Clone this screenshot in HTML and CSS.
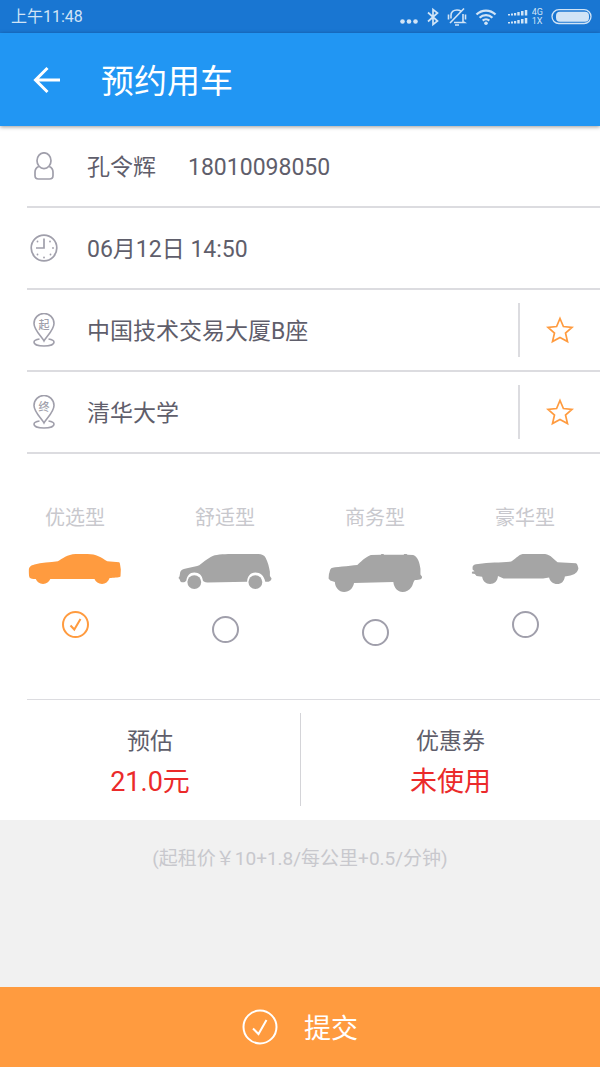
FILE: index.html
```html
<!DOCTYPE html>
<html lang="zh-CN">
<head>
<meta charset="utf-8">
<meta name="viewport" content="width=device-width, initial-scale=1">
<title>预约用车</title>
<link rel="stylesheet" href="styles.css">
</head>
<body>
<div class="status">
  <span class="status-time">上午11:48</span>
  <div class="status-icons">
    <svg width="18" height="20" viewBox="0 0 18 20" fill="currentColor"><circle cx="2.5" cy="14.500" r="2.300"/><circle cx="9" cy="14.500" r="2.300"/><circle cx="15.500" cy="14.500" r="2.300"/></svg>
    <svg class="i-bt" width="12" height="20" viewBox="0 0 12 20" fill="none" stroke="currentColor" stroke-width="1.700"><path d="M1 5.500 10.500 14 6 17.500V2.500l4.500 3.500L1 14.500"/></svg>
    <svg class="i-bell" width="20" height="20" viewBox="0 0 20 20" fill="none" stroke="currentColor" stroke-width="1.600"><path d="M4 11.500V8.500C4 5 6.500 3 10 3c1.500 0 2.800.3 3.800 1M16 7v7.500l1.500 1H7M8 18h4M17 1.500 3 16M1.500 7.500v5M18.500 7.500v5"/></svg>
    <svg class="i-wifi" width="22" height="20" viewBox="0 0 22 20" fill="none" stroke="currentColor" stroke-width="2.300"><path d="M1.500 7.500a13.500 13.500 0 0 1 19 0M4.600 10.800a9 9 0 0 1 12.800 0M7.700 13.700a4.800 4.800 0 0 1 6.600 0"/><circle cx="11" cy="16.200" r="1.800" fill="currentColor" stroke="none"/></svg>
    <svg class="i-signal" width="22" height="20" viewBox="0 0 22 20" fill="currentColor"><path d="M1 7h2v1.500H1zM4 6.500h2v2H4zM7 6h2.200v2.500H7zM10.300 5h2.400v3.500h-2.400zM14 4h2.500v4.500H14zM17.800 3h2.500v5.500h-2.500zM1 15h2v1.500H1zM4 14.500h2v2H4zM7 14h2.200v2.500H7zM10.300 13h2.400v3.500h-2.400zM14 12h2.500v4.500H14zM17.800 11h2.500v5.500h-2.500z"/></svg>
    <span class="net"><span>4G</span><span>1X</span></span>
    <svg class="i-battery" width="41" height="20" viewBox="0 0 41 20"><rect x="1" y="2.700" width="39" height="13.800" rx="6.900" fill="none" stroke="currentColor" stroke-width="1.300"/><rect x="5" y="4.700" width="33" height="10" rx="4" fill="currentColor"/></svg>
  </div>
</div>

<header class="appbar">
  <button class="back" type="button" aria-label="返回">
    <svg width="27" height="28" viewBox="0 0 27 28" fill="none" stroke="currentColor" stroke-width="3"><path d="M14.500 2 2.500 14l12 12M2.500 14H27"/></svg>
  </button>
  <h1 class="title">预约用车</h1>
</header>

<form class="form">
  <section class="rows">
    <div class="row">
      <svg class="row-icon" width="20" height="28" viewBox="0 0 20 28" fill="none" stroke="currentColor" stroke-width="1.700"><ellipse cx="10" cy="8.700" rx="7" ry="7.900"/><path d="M4.800 14.500C2.500 15.500 1 17.500 1 20v3.500C1 26 2.500 27 4.500 27h11c2 0 3.500-1 3.500-3.500V20c0-2.500-1.500-4.500-3.800-5.500"/></svg>
      <div class="row-text"><span>孔令辉</span><span>18010098050</span></div>
    </div>
    <div class="row">
      <svg class="row-icon" width="28" height="28" viewBox="0 0 28 28" fill="none" stroke="currentColor" stroke-width="1.700"><circle cx="14" cy="14" r="12.800"/><path d="M14 4.500V14H6"/><g fill="currentColor" stroke="none"><circle cx="20" cy="7.500" r=".9"/><circle cx="23" cy="14" r=".9"/><circle cx="20.500" cy="20.500" r=".9"/><circle cx="14" cy="23.500" r=".9"/><circle cx="7.500" cy="20.500" r=".9"/><circle cx="7.500" cy="7.500" r=".9"/></g></svg>
      <div class="row-text"><span>06月12日 14:50</span></div>
    </div>
    <div class="row">
      <svg class="row-icon" width="22" height="34" viewBox="0 0 22 34" fill="none" stroke="currentColor" stroke-width="1.600"><path d="M11 28C9 24 1 17 1 10.500a10 10 0 0 1 20 0C21 17 13 24 11 28z"/><path d="M6.500 26C3 26.500 1 27.700 1 29.200 1 31.500 5.500 33 11 33s10-1.500 10-3.800c0-1.500-2-2.700-5.500-3.200"/><text class="pin-text" x="11" y="16" text-anchor="middle">起</text></svg>
      <div class="row-text"><span>中国技术交易大厦B座</span></div>
      <button class="star" type="button" aria-label="收藏起点"><svg width="28" height="28" viewBox="0 0 28 28" fill="none" stroke="currentColor" stroke-width="1.700"><path d="M14 2.500 17.400 10.500 26 11.300 19.500 17 21.500 25.500 14 21.500 6.500 25.500 8.500 17 2 11.300 10.600 10.500z"/></svg></button>
    </div>
    <div class="row">
      <svg class="row-icon" width="22" height="34" viewBox="0 0 22 34" fill="none" stroke="currentColor" stroke-width="1.600"><path d="M11 28C9 24 1 17 1 10.500a10 10 0 0 1 20 0C21 17 13 24 11 28z"/><path d="M6.500 26C3 26.500 1 27.700 1 29.200 1 31.500 5.500 33 11 33s10-1.500 10-3.800c0-1.500-2-2.700-5.500-3.200"/><text class="pin-text" x="11" y="16" text-anchor="middle">终</text></svg>
      <div class="row-text"><span>清华大学</span></div>
      <button class="star" type="button" aria-label="收藏终点"><svg width="28" height="28" viewBox="0 0 28 28" fill="none" stroke="currentColor" stroke-width="1.700"><path d="M14 2.500 17.400 10.500 26 11.300 19.500 17 21.500 25.500 14 21.500 6.500 25.500 8.500 17 2 11.300 10.600 10.500z"/></svg></button>
    </div>
  </section>

  <section class="cars">
    <label class="car">
      <span class="car-name">优选型</span>
      <svg class="car-shape" width="94" height="30" viewBox="84 191 280 91"><path d="M84 240C84 230 90 226 101 223 122 217 148 216 172 213 186 205 200 192 226 191H262C288 191 304 202 322 213L358 216C361 218 361 226 363 238L362 259C356 263 340 262 329 264 325 276 316 282 306 282 295 282 287 276 283 267H149C145 276 138 282 127 282 116 282 109 275 105 267 96 267 89 266 86 262 84 256 84 248 84 240z"/></svg>
      <span class="pick"><input type="radio" name="car" checked><svg class="tick" width="27" height="27" viewBox="0 0 27 27"><path d="M8.500 14.500 12.300 18.500 18.500 8"/></svg></span>
    </label>
    <label class="car">
      <span class="car-name">舒适型</span>
      <svg class="car-shape" width="94" height="35" viewBox="534 191 282 106"><path d="M537 259C540 252 537 244 545 239 559 232 581 231 597 225 613 214 627 200 644 195 660 191 690 191 710 191H776C786 191 794 195 798 202 805 215 809 232 811 245L811 258 816 265C815 273 808 276 797 275 793 256 782 247 767 247 751 247 743 259 742 275L622 277C613 277 610 274 608 271 606 256 597 247 582 247 568 247 560 257 558 271 554 277 546 279 540 274L537 267 534 264z"/><circle cx="582" cy="276" r="21"/><circle cx="767" cy="276" r="21"/></svg>
      <span class="pick"><input type="radio" name="car"><svg class="tick" width="27" height="27" viewBox="0 0 27 27"><path d="M8.500 14.500 12.300 18.500 18.500 8"/></svg></span>
    </label>
    <label class="car">
      <span class="car-name">商务型</span>
      <svg class="car-shape" width="95" height="38" viewBox="83 191 284 115"><path d="M84 252C87 245 86 239 91 234 98 230 146 227 170 224 180 216 192 201 211 194L241 193 243 191H249L251 193H310L312 191H319L322 193 339 194C353 198 359 218 361 236V253L366 260C366 267 361 270 344 270 338 276 339 285 334 291 327 301 317 306 307 306 292 306 281 294 279 276L160 279C157 295 146 306 130 306 114 306 103 293 102 276L88 271 83 265z"/></svg>
      <span class="pick"><input type="radio" name="car"><svg class="tick" width="27" height="27" viewBox="0 0 27 27"><path d="M8.500 14.500 12.300 18.500 18.500 8"/></svg></span>
    </label>
    <label class="car">
      <span class="car-name">豪华型</span>
      <svg class="car-shape" width="108" height="30" viewBox="513 191 324 91"><path d="M516 230C517 224 523 222 533 221 566 216 604 217 633 214 643 209 654 194 668 191H736C753 193 761 207 774 216L830 219C835 222 835 229 837 234 835 247 825 253 813 256L796 259C794 274 785 282 773 282 760 282 751 274 748 262L730 265H610L593 258C592 274 582 282 569 282 556 282 547 273 545 260L528 258 523 252 514 250 514 245 522 243 516 238z"/></svg>
      <span class="pick"><input type="radio" name="car"><svg class="tick" width="27" height="27" viewBox="0 0 27 27"><path d="M8.500 14.500 12.300 18.500 18.500 8"/></svg></span>
    </label>
  </section>

  <section class="fare">
    <div class="fare-cell"><span class="fare-label">预估</span><strong class="fare-value">21.0元</strong></div>
    <div class="fare-cell"><span class="fare-label">优惠券</span><strong class="fare-value">未使用</strong></div>
  </section>

  <p class="note">(起租价￥10+1.8/每公里+0.5/分钟)</p>

  <button class="submit" type="submit">
    <svg width="36" height="36" viewBox="0 0 36 36" fill="none" stroke="currentColor" stroke-width="2"><circle cx="18" cy="18" r="16.500"/><path d="M11 19.500 16.500 25 24.500 11"/></svg>
    <span class="submit-text">提交</span>
  </button>
</form>
</body>
</html>
```
FILE: styles.css
```css
* {
  box-sizing: border-box;
}

body {
  margin: 0;
  min-height: 100vh;
  display: flex;
  flex-direction: column;
  background: #f1f1f1;
  color: #5f5e6b;
  font-family: Roboto, "Noto Sans CJK SC", sans-serif;
  font-size: 23px;
  line-height: 32px;
}

button {
  font: inherit;
  border: 0;
  padding: 0;
  background: none;
  cursor: pointer;
}

svg {
  display: block;
  flex: none;
}

.status {
  display: flex;
  align-items: center;
  justify-content: space-between;
  height: 33px;
  padding: 0 8px 0 11px;
  background: #1976d2;
  color: #d1e4f6;
}

.status-time {
  font-size: 16px;
}

.status-icons {
  display: flex;
  align-items: center;
}

.i-bt {
  margin-left: 9px;
}

.i-bell,
.i-wifi {
  margin-left: 8px;
}

.i-signal {
  margin-left: 10px;
}

.net {
  display: flex;
  flex-direction: column;
  margin: 0 8px 0 3px;
  font-size: 9px;
  line-height: 9px;
}

.net span {
  height: 9px;
  overflow: hidden;
}

.appbar {
  display: flex;
  align-items: center;
  gap: 41px;
  height: 93px;
  padding-left: 33px;
  background: #2196f3;
  color: #fff;
  box-shadow: 0 1px 4px rgba(0, 0, 0, 0.4);
  position: relative;
}

.back {
  color: #fff;
}

.title {
  margin: 0;
  padding-top: 4px;
  font-size: 33px;
  line-height: 48px;
  font-weight: 400;
}

.form {
  flex: 1;
  display: flex;
  flex-direction: column;
}

.rows {
  padding-left: 27px;
  background: #fff;
}

.row {
  display: grid;
  grid-template-columns: 33px 1fr auto;
  align-items: center;
  column-gap: 27px;
  height: 82px;
  border-bottom: 2px solid #dcdce0;
}

.row-icon {
  justify-self: center;
  color: #a09fab;
}

.pin-text {
  font-size: 11px;
  font-weight: 500;
  fill: currentColor;
  stroke: none;
}

.row-text {
  display: flex;
  gap: 32px;
  padding-top: 4px;
  white-space: pre;
}

.star {
  display: flex;
  align-items: center;
  justify-content: center;
  width: 82px;
  height: 54px;
  border-left: 2px solid #dcdce0;
  color: #ff9b3f;
}

.cars {
  display: grid;
  grid-template-columns: repeat(4, 1fr);
  align-items: start;
  height: 245px;
  padding-top: 50px;
  background: #fff;
}

.car {
  display: flex;
  flex-direction: column;
  align-items: center;
  cursor: pointer;
}

.car-name {
  margin-bottom: 22px;
  font-size: 20px;
  line-height: 28px;
  color: #c8c8cd;
}

.car-shape {
  margin-bottom: 27px;
  fill: #a5a5a5;
}

.car:has(input:checked) .car-shape {
  fill: #ff9b3f;
}

.pick {
  display: grid;
}

.pick input,
.tick {
  grid-area: 1 / 1;
}

.pick input {
  appearance: none;
  width: 27px;
  height: 27px;
  margin: 0;
  border: 2px solid #a09fab;
  border-radius: 50%;
}

.pick input:checked {
  border-color: #ff9b3f;
}

.tick {
  visibility: hidden;
  pointer-events: none;
  fill: none;
  stroke: #ff9b3f;
  stroke-width: 2;
}

.pick input:checked + .tick {
  visibility: visible;
}

.fare {
  display: grid;
  grid-template-columns: 1fr 1fr;
  padding: 14px 0;
  background: linear-gradient(#dcdce0, #dcdce0) 27px 0 / 100% 1px no-repeat #fff;
}

.fare-cell {
  display: flex;
  flex-direction: column;
  align-items: center;
  padding: 9px 0 4px;
}

.fare-cell + .fare-cell {
  border-left: 1px solid #d4d4d8;
}

.fare-label {
  line-height: 40px;
}

.fare-value {
  font-size: 27px;
  line-height: 40px;
  font-weight: 400;
  color: #eb2a2a;
}

.note {
  flex: 1;
  margin: 0;
  padding: 23px 16px;
  text-align: center;
  font-size: 19px;
  color: #c8c8cd;
}

.submit {
  display: flex;
  align-items: center;
  justify-content: center;
  gap: 26px;
  height: 80px;
  background: #ff9b3f;
  color: #fff;
  font-size: 27px;
}

.submit-text {
  padding-top: 4px;
}
```
